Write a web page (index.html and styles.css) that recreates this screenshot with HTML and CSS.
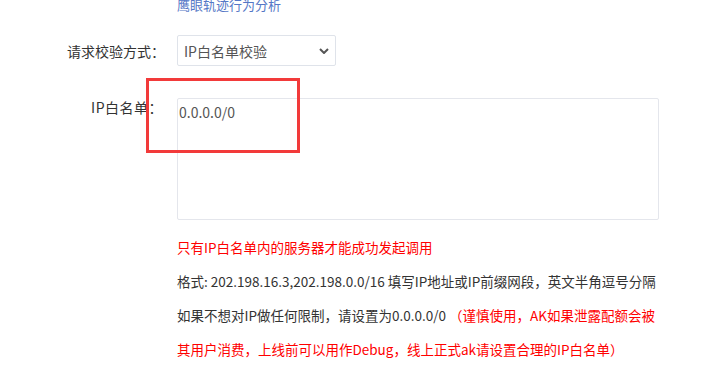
FILE: index.html
```html
<!DOCTYPE html>
<html lang="zh-CN">
<head>
<meta charset="utf-8">
<title>IP白名单</title>
<link rel="stylesheet" href="styles.css">
</head>
<body>
<div class="page">
  <div class="row row-link">
    <div class="label"></div>
    <div class="field"><a class="link" href="#">鹰眼轨迹行为分析</a></div>
  </div>
  <div class="row row-select">
    <div class="label">请求校验方式：</div>
    <div class="field">
      <div class="select">
        <span class="select-text">IP白名单校验</span>
        <svg class="chev" width="10" height="6" viewBox="0 0 10 6"><path d="M1 1 L5 5 L9 1" fill="none" stroke="#555" stroke-width="2"/></svg>
      </div>
    </div>
  </div>
  <div class="row row-area">
    <div class="label label-top">IP白名单：</div>
    <div class="field">
      <div class="textarea">0.0.0.0/0</div>
      <div class="hints">
        <div class="red">只有IP白名单内的服务器才能成功发起调用</div>
        <div>格式: 202.198.16.3,202.198.0.0/16 填写IP地址或IP前缀网段，英文半角逗号分隔</div>
        <div>如果不想对IP做任何限制，请设置为0.0.0.0/0 <span class="red">（谨慎使用，AK如果泄露配额会被<br>其用户消费，上线前可以用作Debug，线上正式ak请设置合理的IP白名单）</span></div>
      </div>
    </div>
  </div>
  <div class="highlight"></div>
</div>
</body>
</html>
```
FILE: styles.css
```css
html, body {
  margin: 0;
  padding: 0;
  background: #fff;
}
body {
  font-family: "Noto Sans CJK SC", "Noto Sans", sans-serif;
  color: #333;
  font-size: 14px;
  overflow: hidden;
  width: 711px;
  height: 378px;
}
.page {
  position: relative;
  margin-top: -6px;
}
.row {
  display: grid;
  grid-template-columns: 165px 1fr;
  column-gap: 12px;
}
.label {
  text-align: right;
  color: #333;
  font-size: 14px;
  white-space: nowrap;
}
.row-link {
  height: 20px;
  line-height: 20px;
}
.link {
  color: #5577c6;
  text-decoration: none;
  font-size: 13px;
}
.row-select {
  margin-top: 21px;
  align-items: center;
}
.select {
  height: 29px;
  border: 1px solid #dfe3ea;
  border-radius: 2px;
  display: flex;
  align-items: center;
  justify-content: space-between;
  padding: 0 6px 0 6px;
  box-sizing: content-box;
  width: 145px;
}
.select-text {
  color: #555;
  font-size: 14px;
}
.chev {
  display: block;
}
.row-area {
  margin-top: 32px;
}
.label-top {
  line-height: 18px;
  padding-top: 0;
  padding-right: 2px;
  letter-spacing: 0.5px;
}
.textarea {
  width: 482px;
  height: 122px;
  border: 1px solid #e4e6ec;
  border-radius: 2px;
  color: #555;
  font-size: 14px;
  line-height: 18px;
  padding: 4px 1px;
  box-sizing: border-box;
}
.hints {
  margin-top: 10px;
  line-height: 34px;
  font-size: 13.5px;
  white-space: nowrap;
  color: #333;
}
.red {
  color: #f00;
}
.highlight {
  position: absolute;
  left: 146px;
  top: 84px;
  width: 154px;
  height: 75px;
  border: 3px solid #f23a3a;
  box-sizing: border-box;
}
```
